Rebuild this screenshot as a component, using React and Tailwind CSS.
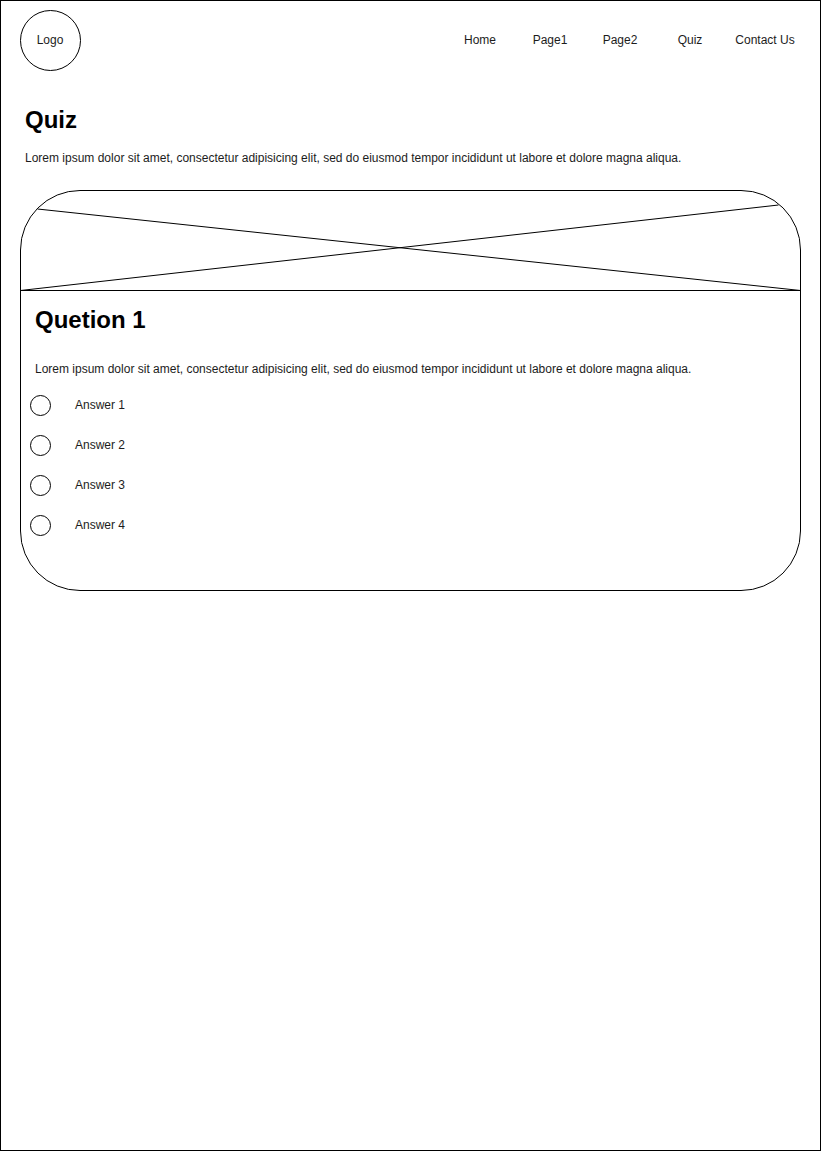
const links = [
  { label: "Home", width: "w-[60px]" },
  { label: "Page1", width: "w-[80px]" },
  { label: "Page2", width: "w-[60px]" },
  { label: "Quiz", width: "w-[80px]" },
  { label: "Contact Us", width: "w-[70px]" },
];

const answers = ["Answer 1", "Answer 2", "Answer 3", "Answer 4"];

const lorem =
  "Lorem ipsum dolor sit amet, consectetur adipisicing elit, sed do eiusmod tempor incididunt ut labore et dolore magna aliqua.";

function Header() {
  return (
    <header className="flex items-center justify-between pt-[9px] pl-[19px] pr-5">
      <div className="flex size-[61px] items-center justify-center rounded-full border border-black pr-px pb-px">
        Logo
      </div>
      <nav className="flex">
        {links.map((link) => (
          <a key={link.label} href="#" className={`${link.width} text-center whitespace-nowrap pb-px`}>
            {link.label}
          </a>
        ))}
      </nav>
    </header>
  );
}

function QuizCard() {
  return (
    <section className="mx-[19px] mt-[25px] h-[401px] w-[781px] overflow-hidden rounded-[60px] border border-black">
      <div className="h-[100px] border-b border-black">
        <svg className="block" width="779" height="99" viewBox="21 191 779 99" fill="none" stroke="black">
          <path d="M37.5 209 L800.5 290.5 M20.5 290.5 L778.5 205" />
        </svg>
      </div>
      <div className="pl-[9px]">
        <h2 className="mt-[14px] pl-[5px] text-2xl leading-[29px] font-bold text-black">Quetion 1</h2>
        <p className="mt-[28px] pl-[5px] leading-[14px]">{lorem}</p>
        <ul className="mt-[19px] flex flex-col gap-[19px]">
          {answers.map((answer) => (
            <li key={answer} className="flex items-center gap-6">
              <span className="size-[21px] rounded-full border border-black" />
              <span className="pb-px leading-[14px]">{answer}</span>
            </li>
          ))}
        </ul>
      </div>
    </section>
  );
}

export default function App() {
  return (
    <main className="h-[1151px] w-[821px] border border-black bg-white font-['Liberation_Sans',Arial,sans-serif] text-[12px] leading-[14px] text-[#1c1c1c]">
      <Header />
      <div className="mt-[34px] pl-6">
        <h1 className="text-2xl leading-[29px] font-bold text-black">Quiz</h1>
        <p className="mt-[17px] leading-[14px]">{lorem}</p>
      </div>
      <QuizCard />
    </main>
  );
}
